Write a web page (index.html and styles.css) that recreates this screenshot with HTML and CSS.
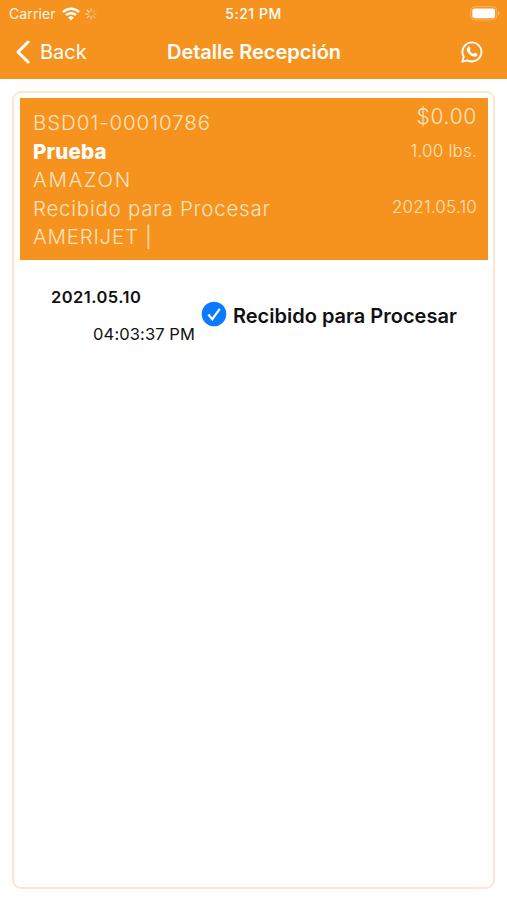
FILE: index.html
```html
<!DOCTYPE html>
<html lang="es">
<head>
    <meta charset="UTF-8">
    <meta name="viewport" content="width=device-width, initial-scale=1.0">
    <title>Detalle Recepción</title>
    <link rel="stylesheet" href="styles.css">
</head>
<body>
    <header class="header">
        <div class="status-bar">
            <div class="carrier">
                <span class="carrier-name">Carrier</span>
                <svg class="wifi" width="18" height="14" viewBox="0 0 18 14" fill="none" stroke="#fff" stroke-width="2.5">
                    <path d="M1 5.1a11.5 11.5 0 0 1 16 0"/>
                    <path d="M4 8.2a7.2 7.2 0 0 1 10 0"/>
                    <path d="M9 13.4L6.2 10.7a4 4 0 0 1 5.6 0z" fill="#fff" stroke="none"/>
                </svg>
                <svg class="spinner" width="12" height="12" viewBox="0 0 12 12" stroke="#fff" stroke-width="1.2" stroke-linecap="round">
                    <path d="M6 .8v2.5" opacity=".5"/>
                    <path d="M9.7 2.3L7.9 4.1" opacity=".3"/>
                    <path d="M11.2 6H8.7" opacity=".3"/>
                    <path d="M9.7 9.7L7.9 7.9" opacity=".4"/>
                    <path d="M6 11.2V8.7" opacity=".5"/>
                    <path d="M2.3 9.7l1.8-1.8" opacity=".65"/>
                    <path d="M.8 6h2.5" opacity=".8"/>
                    <path d="M2.3 2.3l1.8 1.8" opacity=".9"/>
                </svg>
            </div>
            <div class="time">5:21 PM</div>
            <svg class="battery" width="31" height="15" viewBox="0 0 31 15">
                <rect x=".7" y=".7" width="26" height="13.2" rx="4" fill="none" stroke="#fff" stroke-opacity=".3"/>
                <rect x="2.3" y="2.4" width="22.8" height="9.8" rx="2.3" fill="#fff"/>
                <path d="M28 5v4.6c2-.8 2-3.8 0-4.6z" fill="#fff" fill-opacity=".35"/>
            </svg>
        </div>
        <nav class="nav">
            <div class="back">
                <svg width="14" height="24" viewBox="0 0 14 24" fill="none" stroke="#fff" stroke-width="3" stroke-linecap="round" stroke-linejoin="round">
                    <path d="M12 2L2 12l10 10"/>
                </svg>
                <span>Back</span>
            </div>
            <h1 class="title">Detalle Recepción</h1>
            <svg class="whatsapp" width="22" height="22" viewBox="0 0 22 22">
                <path d="M1.3 20.7l1.4-5A9.5 9.5 0 1 1 6.4 19.3z" fill="none" stroke="#fff" stroke-width="1.9" stroke-linejoin="round"/>
                <path d="M7.3 5.5c.5-.5 1.1-.4 1.4.2l.8 1.9c.2.6-.8 1.4-.7 1.8.6 1.5 1.9 2.8 3.5 3.4.5.1 1.2-1.2 1.8-1l2 1c.5.3.5.9.1 1.6-.7 1.2-2.2 1.7-3.7 1.2-3.2-1-5.5-3.2-6.5-5.9-.5-1.6 0-3.1 1.3-4.2z" fill="#fff"/>
            </svg>
        </nav>
    </header>

    <main class="card">
        <section class="summary">
            <div class="info">
                <p class="code">BSD01-00010786</p>
                <p class="name">Prueba</p>
                <p class="store">AMAZON</p>
                <p class="state">Recibido para Procesar</p>
                <p class="courier">AMERIJET |</p>
            </div>
            <div class="amounts">
                <p class="price">$0.00</p>
                <p class="weight">1.00 lbs.</p>
                <p class="date">2021.05.10</p>
            </div>
        </section>

        <section class="event">
            <div class="when">
                <p class="event-date">2021.05.10</p>
                <p class="event-time">04:03:37 PM</p>
            </div>
            <svg class="check" width="26" height="26" viewBox="0 0 26 26">
                <circle cx="13" cy="13" r="12.3" fill="#0a7bff"/>
                <path d="M7.3 13.5l4 4.7 7.5-10.3" fill="none" stroke="#fff" stroke-width="2.2"/>
            </svg>
            <p class="event-state">Recibido para Procesar</p>
        </section>
    </main>
</body>
</html>
```
FILE: styles.css
```css
*{
    margin: 0;
    padding: 0;
    box-sizing: border-box;
}
body{
    height: 900px;
    display: flex;
    flex-direction: column;
    background-color: #fff;
    font-family: Inter, "Liberation Sans", sans-serif;
    overflow: hidden;
}
p,
span{
    white-space: nowrap;
}

/*==== Header ====*/
.header{
    height: 79px;
    background-color: #f6931e;
    color: #fff;
}
.status-bar{
    height: 27px;
    display: grid;
    grid-template-columns: 1fr auto 1fr;
    align-items: center;
    padding: 0 6px;
}
.carrier{
    display: flex;
    align-items: center;
    padding-left: 3px;
}
.carrier-name{
    font-size: 14px;
    width: 53px;
    letter-spacing: 0.1px;
    opacity: 0.9;
}
.spinner{
    margin-left: 5px;
}
.time{
    font-size: 14px;
    font-weight: 500;
    letter-spacing: 0.5px;
}
.battery{
    justify-self: end;
}
.nav{
    height: 50px;
    display: grid;
    grid-template-columns: 1fr auto 1fr;
    align-items: center;
    padding: 0 24px;
}
.back{
    display: flex;
    align-items: center;
    gap: 10px;
    margin-left: -8px;
    font-size: 20px;
}
.title{
    padding-left: 1px;
    font-size: 20px;
    font-weight: 600;
}
.whatsapp{
    justify-self: end;
}

/*==== Card ====*/
.card{
    width: 483px;
    height: 798px;
    margin: 12px 0 0 12px;
    padding: 5px 5px 6px 6px;
    border: 2px solid #fde6cf;
    border-radius: 9px;
}
.summary{
    height: 162px;
    display: flex;
    justify-content: space-between;
    padding: 10px 11px 0 13px;
    background-color: #f6931e;
    color: #ffe3c0;
    font-weight: 300;
}
.info{
    margin-top: 1px;
    font-size: 20.5px;
    line-height: 28.6px;
    letter-spacing: 0.75px;
}
.code{
    letter-spacing: 0.9px;
}
.name{
    color: #fff;
    font-weight: 800;
    letter-spacing: 0.2px;
}
.store{
    letter-spacing: 1.6px;
}
.amounts{
    display: flex;
    flex-direction: column;
    align-items: flex-end;
    font-size: 17px;
    letter-spacing: 0.2px;
}
.price{
    font-size: 21px;
    line-height: 18px;
    letter-spacing: 0.7px;
}
.weight{
    margin-top: 15px;
    line-height: 20px;
}
.date{
    margin-top: 36px;
    line-height: 20px;
}

/*==== Event ====*/
.event{
    display: flex;
    padding: 27px 0 0 31px;
    color: #111;
}
.when{
    width: 144px;
    margin-right: 6px;
}
.event-date{
    font-size: 16.5px;
    line-height: 20px;
    font-weight: 600;
    letter-spacing: 0.45px;
}
.event-time{
    margin-top: 17px;
    font-size: 16.5px;
    line-height: 20px;
    letter-spacing: 0.1px;
    text-align: right;
}
.check{
    margin-top: 14px;
}
.event-state{
    margin: 16px 0 0 6px;
    font-size: 20px;
    line-height: 26px;
    font-weight: 600;
}
```
